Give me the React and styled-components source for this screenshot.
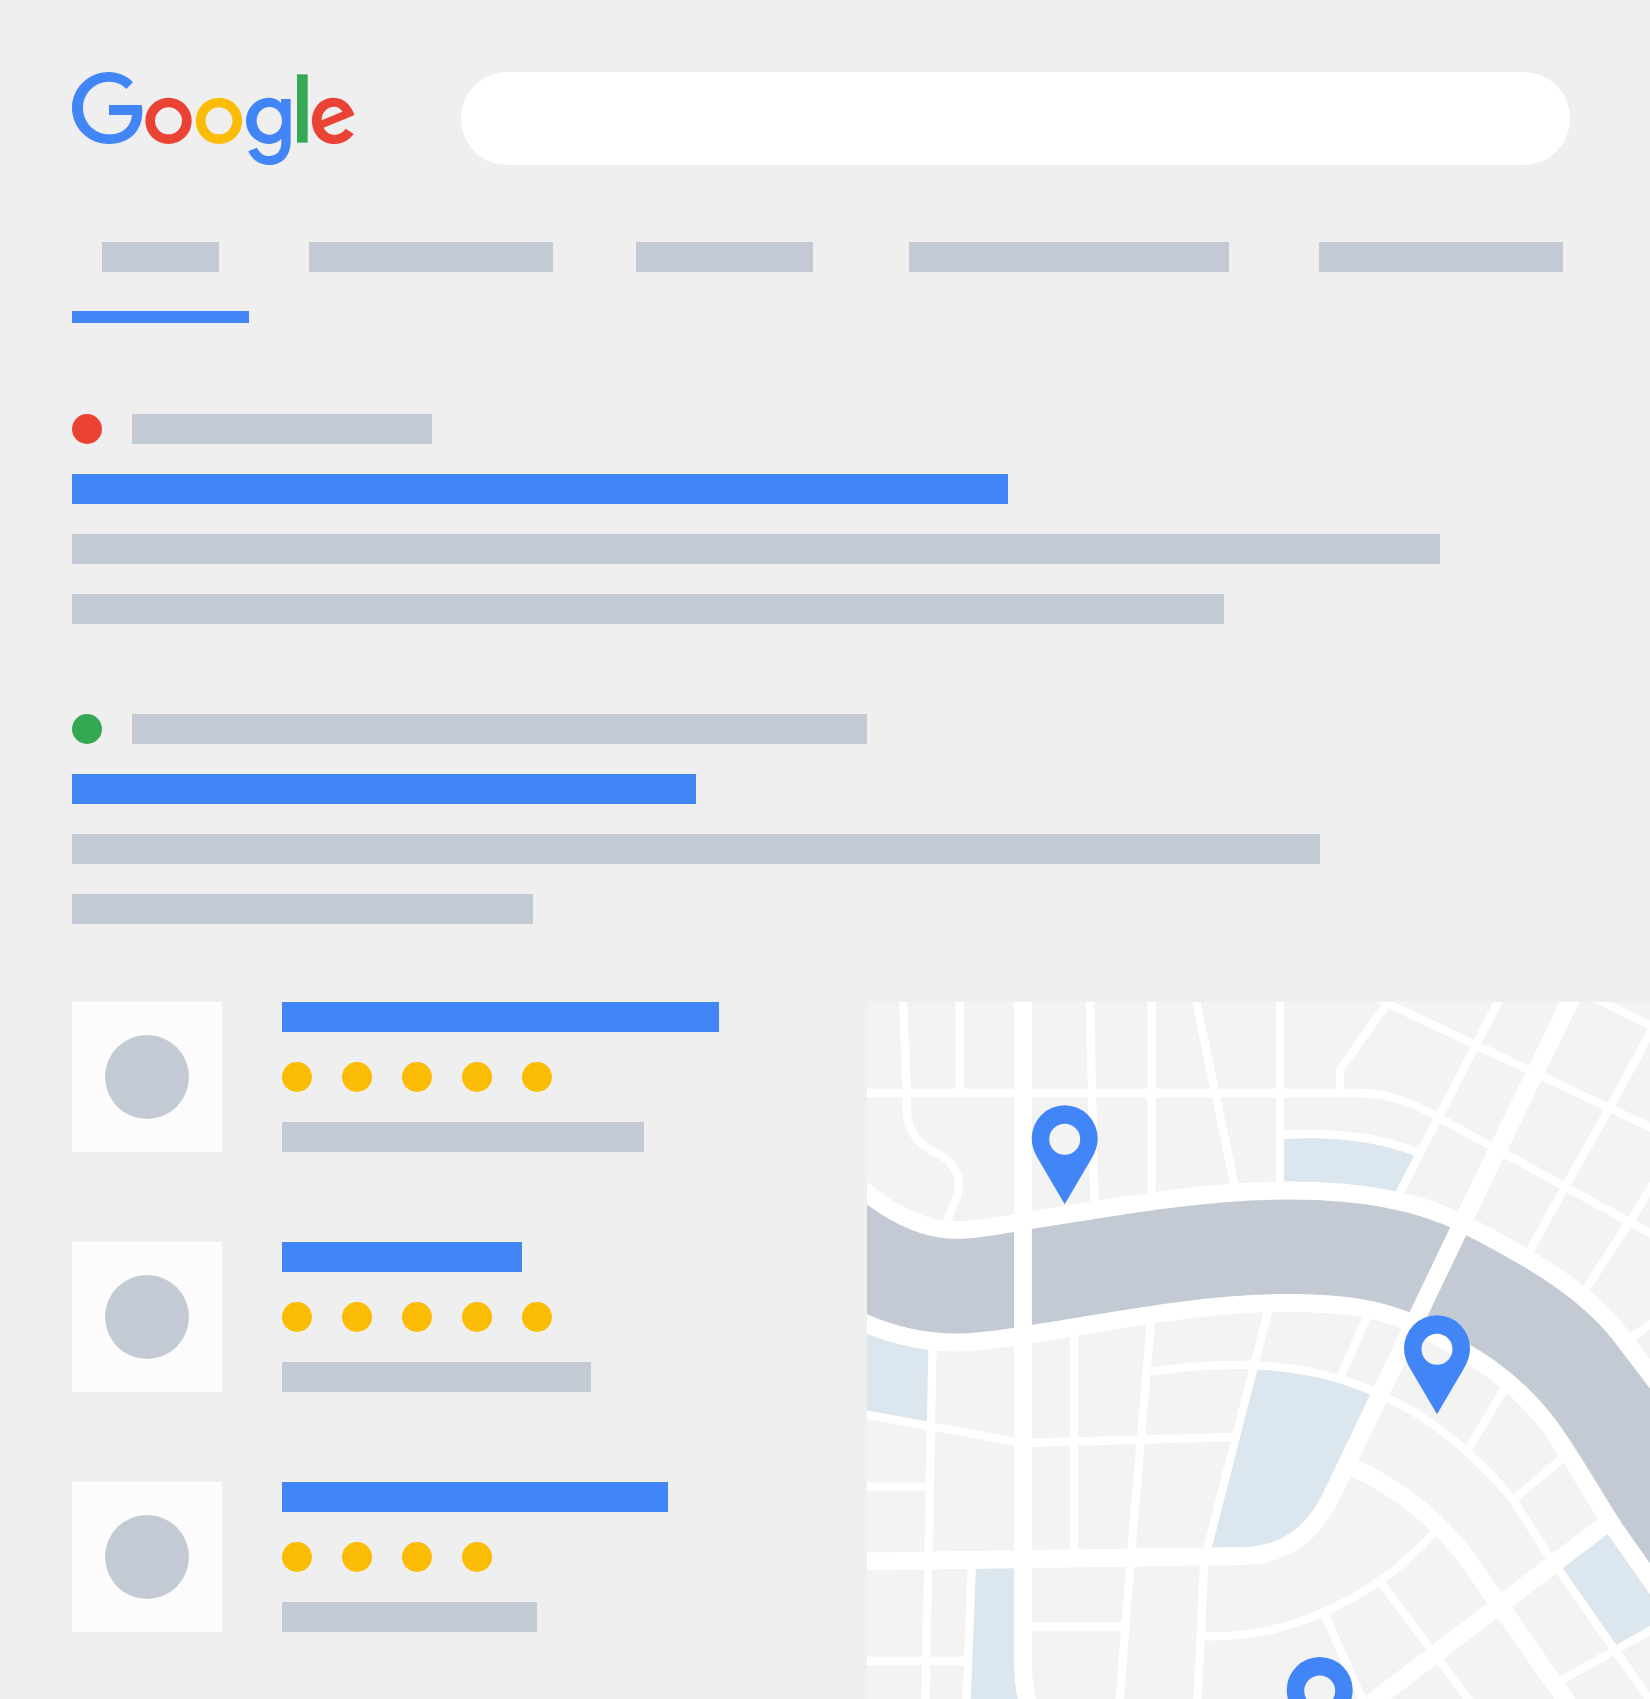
import React from "react";
import styled, { createGlobalStyle } from "styled-components";

const color = {
  page: "#efefef",
  gray: "#c3cad4",
  blue: "#4285f6",
  red: "#ea4335",
  green: "#34a853",
  yellow: "#fbbc05",
  land: "#f3f3f3",
  park: "#dce6ee",
};

const GlobalStyle = createGlobalStyle`
  *, *::before, *::after { box-sizing: border-box; }
  body {
    margin: 0;
    background: ${color.page};
    font-family: Roboto, "Liberation Sans", sans-serif;
  }
`;

const Page = styled.div`
  display: flex;
  flex-direction: column;
  min-height: 100vh;
  padding-top: 72px;
  overflow: hidden;
`;

const Header = styled.header`
  display: flex;
  align-items: center;
  gap: 107px;
  padding: 0 80px 0 72px;
`;

const LogoLink = styled.a`
  display: block;
  flex: none;
  width: 282px;
  height: 93px;
  svg { display: block; width: 100%; height: 100%; }
`;

const SearchForm = styled.form`
  flex: 1;
  min-width: 0;
  display: flex;
`;

const SearchInput = styled.input`
  flex: 1;
  min-width: 0;
  height: 93px;
  padding: 0 48px;
  border: 0;
  border-radius: 48px;
  background: #fff;
  font: inherit;
  font-size: 32px;
  outline: none;
`;

const Tabs = styled.nav`
  display: flex;
  gap: 30px;
  margin-top: 77px;
  padding: 0 57px 0 72px;
`;

const Tab = styled.button`
  display: block;
  flex: 0 1 ${(p) => p.$width}px;
  min-width: 0;
  padding: 0 0 39px 30px;
  border: 0;
  border-bottom: 12px solid ${(p) => (p.$active ? color.blue : "transparent")};
  background: none;
  cursor: pointer;
`;

const Bar = styled.span`
  display: block;
  width: ${(p) => p.$width}px;
  max-width: 100%;
  height: 30px;
  background: ${(p) => p.$color || color.gray};
`;

const TitleLink = styled.a`
  display: block;
  width: ${(p) => p.$width}px;
  max-width: 100%;
  height: 30px;
  background: ${color.blue};
`;

const Results = styled.main`
  display: flex;
  flex-direction: column;
  gap: 90px;
  margin-top: 91px;
  padding: 0 80px 0 72px;
`;

const Result = styled.article`
  display: flex;
  flex-direction: column;
  gap: 30px;
`;

const Source = styled.div`
  display: flex;
  gap: 30px;
`;

const Dot = styled.span`
  flex: none;
  width: 30px;
  height: 30px;
  border-radius: 50%;
  background: ${(p) => p.$color};
`;

const Local = styled.section`
  display: grid;
  grid-template-columns: minmax(0, 867fr) minmax(0, 783fr);
  align-items: start;
  margin-top: 78px;
`;

const Places = styled.div`
  display: flex;
  flex-direction: column;
  gap: 90px;
  padding-left: 72px;
`;

const Place = styled.article`
  display: flex;
  gap: 60px;
`;

const Thumb = styled.div`
  flex: none;
  display: grid;
  place-items: center;
  width: 150px;
  height: 150px;
  background: #fcfcfc;
  &::before {
    content: "";
    width: 84px;
    height: 84px;
    border-radius: 50%;
    background: ${color.gray};
  }
`;

const PlaceInfo = styled.div`
  flex: 1;
  min-width: 0;
  display: flex;
  flex-direction: column;
  gap: 30px;
`;

const Rating = styled.div`
  display: flex;
  gap: 30px;
`;

const MapSvg = styled.svg`
  display: block;
  width: 100%;
  background: ${color.land};
`;

function Logo() {
  return (
    <svg viewBox="36 36 846 279" aria-hidden="true">
      <path
        fill={color.blue}
        d="M219 66C199 47 173 36 147 36 86 36 36 84 36 144s50 108 111 108c32 0 58-11 76-30 18-19 24-45 24-66 0-7-1-15-2-21H147v30h69c-2 18-8 29-16 38-11 11-28 20-53 20-43 0-78-35-78-79s35-79 78-79c23 0 40 9 52 22Z"
      />
      <circle cx="325.5" cy="182.5" r="55" fill="none" stroke={color.red} strokeWidth="29" />
      <circle cx="477" cy="182.5" r="55" fill="none" stroke={color.yellow} strokeWidth="29" />
      <path
        fill={color.blue}
        fillRule="evenodd"
        d="M663 117h29v125c0 51-30 73-65 73-33 0-54-22-62-41l26-11c5 11 16 25 36 25 23 0 37-14 37-41v-10h-1c-7 8-20 15-37 15-36 0-68-31-68-69 0-39 32-70 68-70 17 0 30 7 37 16ZM629 141c-22 0-39 18-39 42 0 23 17 41 39 41 21 0 37-18 37-41 0-24-16-42-37-42Z"
      />
      <rect x="711" y="43" width="32" height="205" fill={color.green} />
      <path
        fill={color.red}
        fillRule="evenodd"
        d="M857 206l24 16c-8 11-26 30-58 30-40 0-67-31-67-69 0-41 28-70 64-70s54 29 60 44l3 8-92 38c7 14 18 21 32 21 15 0 26-7 34-18ZM785 181l62-26c-4-9-13-15-25-15-16 0-38 14-37 41Z"
      />
    </svg>
  );
}

const northBank =
  "C893 1216 925 1230 956 1230C982 1230 1005 1224 1032 1220C1110 1208 1200 1190.5 1290 1190.5C1360 1190.5 1418 1201 1462 1223C1535 1260 1590 1293 1625 1341L1657 1383";
const southBank =
  "C890 1335 925 1342.5 957 1342.5C982 1342.5 1005 1338 1032 1334C1110 1322 1200 1303 1287 1303C1345 1303 1380 1309 1412 1323C1478 1357 1515 1380 1550 1427C1572 1457 1600 1507 1617 1532L1657 1589";

const parks = [
  "M1280 1135C1325 1132 1375 1136 1417 1152L1397 1195H1280Z",
  "M860 1325L932 1345L930 1424L860 1414Z",
  "M1257 1365C1300 1366 1340 1376 1380 1392L1330 1499C1313 1533 1284 1556 1243 1556H1206Z",
  "M972 1562H1023V1670L1028 1702H966Z",
  "M1606 1526L1657 1592V1627L1616 1650L1555 1564Z",
];

const avenues = [
  `M858 1186${northBank}`,
  `M858 1320${southBank}`,
  "M1023 995V1665C1023 1682 1025 1692 1028 1704",
  "M1573 995L1466 1215L1330 1499C1313 1533 1284 1556 1243 1556L860 1561.5",
  "M1350 1466C1400 1488 1445 1525 1475 1570L1494 1597L1568 1703",
  "M1606 1524L1371 1703",
];

const streets = [
  "M903 998L906.5 1089L907 1110C907 1134 921 1146 938 1154C955 1162 963 1180 957 1196L946 1224",
  "M959.5 998V1093",
  "M860 1093H1358C1390 1093 1415 1104 1438 1117L1655 1236",
  "M1090 998L1092 1093L1094.5 1208",
  "M1151.5 998V1200",
  "M1195.5 998L1235.5 1190",
  "M1280 998V1188",
  "M1340 1093V1069L1390 1000",
  "M1376 998L1655 1129.5",
  "M1500 998L1398 1196",
  "M1595 998L1655 1028",
  "M1655 1024L1609 1109L1565 1187L1528 1254",
  "M1655 1181L1630 1221L1584 1292",
  "M1655 1321L1628 1340",
  "M1280 1135C1325 1132 1375 1136 1417 1152",
  "M932.5 1348L925.5 1702",
  "M860 1413.5L1023 1443L1233 1437",
  "M860 1486.5H929",
  "M860 1661H967",
  "M1030 1626.5H1125",
  "M1074 1330V1556",
  "M1151 1320L1131.5 1549L1119.5 1702",
  "M1268.5 1309L1206 1554",
  "M1204.5 1556L1197.5 1702",
  "M972 1562L966.5 1702",
  "M1151 1372C1185 1366 1215 1364.5 1250 1365C1350 1368 1440 1410 1513 1500L1549 1556L1652 1703",
  "M1367 1316L1341 1376",
  "M1505 1388L1468 1449",
  "M1564 1457L1514 1499",
  "M1434 1533C1375 1597 1290 1640 1201 1636",
  "M1379 1580L1471 1703",
  "M1324 1613L1363 1701",
  "M1655 1628L1560 1681",
];

const pins = [
  [1064.7, 1204.3],
  [1437, 1414.3],
  [1319.7, 1756],
];

function CityMap() {
  return (
    <MapSvg viewBox="867 1002 783 697" role="img" aria-label="Map">
      {parks.map((d) => (
        <path key={d} d={d} fill={color.park} />
      ))}
      <path
        fill={color.gray}
        d={`M858 1186${northBank}V1589L1617 1532C1600 1507 1572 1457 1550 1427C1515 1380 1478 1357 1412 1323C1380 1309 1345 1303 1287 1303C1200 1303 1110 1322 1032 1334C1005 1338 982 1342.5 957 1342.5C925 1342.5 890 1335 858 1320Z`}
      />
      <g fill="none" stroke="#fff" strokeWidth="8.3">
        {streets.map((d) => (
          <path key={d} d={d} />
        ))}
      </g>
      <g fill="none" stroke="#fff" strokeWidth="17.8">
        {avenues.map((d) => (
          <path key={d} d={d} />
        ))}
      </g>
      {pins.map(([x, y]) => (
        <path
          key={x}
          transform={`translate(${x} ${y})`}
          fill={color.blue}
          fillRule="evenodd"
          d="M0 0L-27 -46C-31 -53 -33 -59 -33 -66A33 33 0 0 1 33 -66C33 -59 31 -53 27 -46ZM-15.5 -65a15.5 15.5 0 1 0 31 0a15.5 15.5 0 1 0 -31 0Z"
        />
      ))}
    </MapSvg>
  );
}

const tabs = [
  { name: "All", width: 177, bar: 117 },
  { name: "Images", width: 297, bar: 244 },
  { name: "News", width: 243, bar: 177 },
  { name: "Videos", width: 380, bar: 320 },
  { name: "More", width: 304, bar: 244 },
];

const results = [
  { dot: color.red, source: 300, title: 936, lines: [1368, 1152] },
  { dot: color.green, source: 735, title: 624, lines: [1248, 461] },
];

const places = [
  { title: 437, stars: 5, line: 362 },
  { title: 240, stars: 5, line: 309 },
  { title: 386, stars: 4, line: 255 },
];

export default function App() {
  return (
    <>
      <GlobalStyle />
      <Page>
        <Header>
          <LogoLink href="#" aria-label="Google">
            <Logo />
          </LogoLink>
          <SearchForm role="search">
            <SearchInput type="search" aria-label="Search" />
          </SearchForm>
        </Header>
        <Tabs>
          {tabs.map((t, i) => (
            <Tab key={t.name} type="button" aria-label={t.name} $width={t.width} $active={i === 0}>
              <Bar $width={t.bar} />
            </Tab>
          ))}
        </Tabs>
        <Results>
          {results.map((r) => (
            <Result key={r.dot}>
              <Source>
                <Dot $color={r.dot} />
                <Bar $width={r.source} />
              </Source>
              <TitleLink href="#" aria-label="Result" $width={r.title} />
              {r.lines.map((w) => (
                <Bar key={w} $width={w} />
              ))}
            </Result>
          ))}
        </Results>
        <Local>
          <Places>
            {places.map((p) => (
              <Place key={p.title}>
                <Thumb />
                <PlaceInfo>
                  <TitleLink href="#" aria-label="Place" $width={p.title} />
                  <Rating role="img" aria-label={`${p.stars} out of 5`}>
                    {Array.from({ length: p.stars }, (_, i) => (
                      <Dot key={i} $color={color.yellow} />
                    ))}
                  </Rating>
                  <Bar $width={p.line} />
                </PlaceInfo>
              </Place>
            ))}
          </Places>
          <CityMap />
        </Local>
      </Page>
    </>
  );
}
